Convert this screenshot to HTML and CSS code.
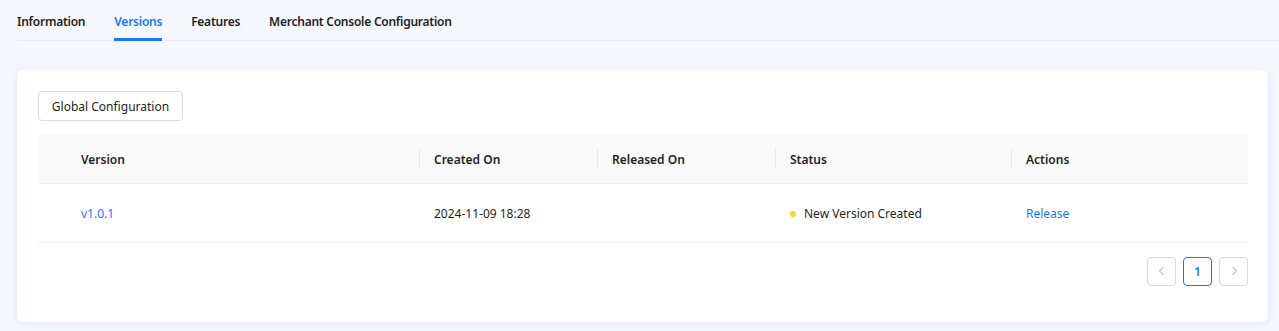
FILE: index.html
```html
<!DOCTYPE html>
<html lang="en">
<head>
    <meta charset="UTF-8">
    <meta name="viewport" content="width=device-width, initial-scale=1.0">
    <title>Versions</title>
    <link rel="stylesheet" href="styles.css">
</head>
<body>
    <div class="tabs">
        <div class="tab">Information</div>
        <div class="tab active">Versions</div>
        <div class="tab">Features</div>
        <div class="tab">Merchant Console Configuration</div>
    </div>

    <div class="card">
        <button class="btn">Global Configuration</button>

        <table class="table">
            <thead>
                <tr>
                    <th class="col-version">Version</th>
                    <th class="col-created">Created On</th>
                    <th class="col-released">Released On</th>
                    <th class="col-status">Status</th>
                    <th class="col-actions">Actions</th>
                </tr>
            </thead>
            <tbody>
                <tr>
                    <td class="col-version"><a class="link">v1.0.1</a></td>
                    <td>2024-11-09 18:28</td>
                    <td></td>
                    <td><span class="dot"></span>New Version Created</td>
                    <td><a class="link">Release</a></td>
                </tr>
            </tbody>
        </table>

        <div class="pagination">
            <div class="page-item disabled">
                <svg width="12" height="12" viewBox="0 0 12 12"><path d="M7.5 2 L3.5 6 L7.5 10" fill="none" stroke="currentColor" stroke-width="1.1"/></svg>
            </div>
            <div class="page-item current">1</div>
            <div class="page-item disabled">
                <svg width="12" height="12" viewBox="0 0 12 12"><path d="M4.5 2 L8.5 6 L4.5 10" fill="none" stroke="currentColor" stroke-width="1.1"/></svg>
            </div>
        </div>
    </div>
</body>
</html>
```

FILE: styles.css
```css
body {
    margin: 0;
    background: #f5f8fe;
    font-family: "Noto Sans", Arial, sans-serif;
    font-size: 12px;
    color: #1f1f1f;
}

.tabs {
    display: flex;
    gap: 29px;
    margin-left: 17px;
    border-bottom: 1px solid #e9ebef;
    height: 40px;
}

.tab {
    padding-top: 12px;
    font-weight: 600;
    letter-spacing: -0.25px;
    line-height: 20px;
    box-sizing: border-box;
    height: 41px;
    border-bottom: 3px solid transparent;
}

.tab.active {
    color: #1677ff;
    border-bottom-color: #1677ff;
}

.card {
    margin: 29px 11px 9px 17px;
    background: #fff;
    border-radius: 6px;
    box-shadow: 0 2px 8px rgba(160, 180, 230, 0.25);
    padding: 21px 20px 36px 21px;
}

.btn {
    font-family: inherit;
    font-size: 12px;
    color: #1f1f1f;
    background: #fff;
    border: 1px solid #d9d9d9;
    border-radius: 4px;
    height: 30px;
    padding: 0 10px;
    width: 145px;
    white-space: nowrap;
}

.table {
    width: 100%;
    margin-top: 14px;
    border-collapse: collapse;
    table-layout: fixed;
}

.table th {
    background: #fafafa;
    font-weight: 600;
    text-align: left;
    height: 48px;
    padding: 2px 15px 0;
    box-sizing: border-box;
    border-bottom: 1px solid #eeeeee;
    position: relative;
}

.table th + th::before {
    content: "";
    position: absolute;
    left: 0;
    top: 14px;
    height: 20px;
    width: 1px;
    background: #e8e8e8;
}

.table td {
    height: 59px;
    padding: 2px 15px 0;
    box-sizing: border-box;
    border-bottom: 1px solid #eeeeee;
}

.table .col-version {
    width: 381px;
    padding-left: 43px;
}

.table .col-created,
.table .col-released {
    width: 178px;
}

.table .col-status {
    width: 236px;
}

.link {
    color: #1677ff;
    cursor: pointer;
}

.dot {
    display: inline-block;
    width: 6px;
    height: 6px;
    border-radius: 50%;
    background: #fadb14;
    margin: 0 8px 1px 0;
    vertical-align: middle;
}

.pagination {
    display: flex;
    justify-content: flex-end;
    gap: 7px;
    margin-top: 14px;
}

.page-item {
    width: 29px;
    height: 29px;
    box-sizing: border-box;
    border: 1px solid #d9d9d9;
    border-radius: 4px;
    display: flex;
    align-items: center;
    justify-content: center;
    font-weight: 600;
}

.page-item.disabled {
    color: #c4c4c4;
}

.page-item.current {
    border-color: #1677ff;
    color: #1677ff;
}
```
